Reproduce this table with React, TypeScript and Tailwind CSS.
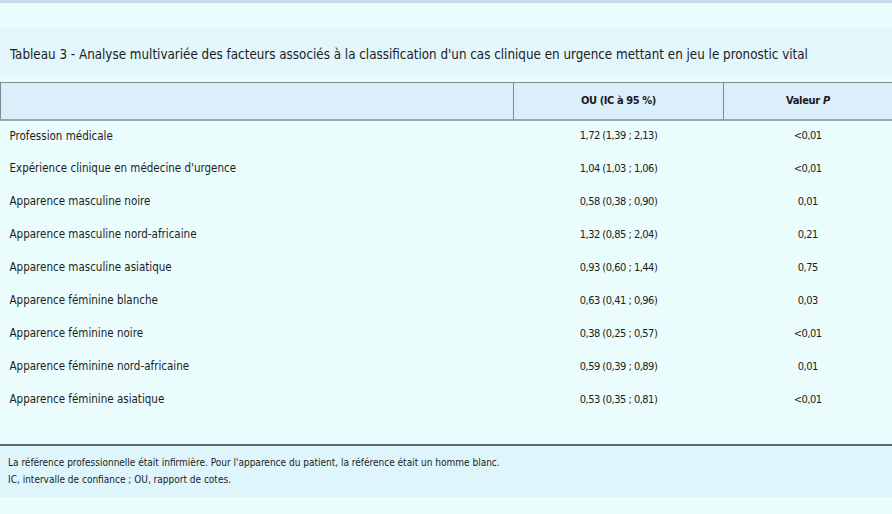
const rows = [
  ["Profession médicale", "1,72 (1,39 ; 2,13)", "<0,01"],
  ["Expérience clinique en médecine d'urgence", "1,04 (1,03 ; 1,06)", "<0,01"],
  ["Apparence masculine noire", "0,58 (0,38 ; 0,90)", "0,01"],
  ["Apparence masculine nord-africaine", "1,32 (0,85 ; 2,04)", "0,21"],
  ["Apparence masculine asiatique", "0,93 (0,60 ; 1,44)", "0,75"],
  ["Apparence féminine blanche", "0,63 (0,41 ; 0,96)", "0,03"],
  ["Apparence féminine noire", "0,38 (0,25 ; 0,57)", "<0,01"],
  ["Apparence féminine nord-africaine", "0,59 (0,39 ; 0,89)", "0,01"],
  ["Apparence féminine asiatique", "0,53 (0,35 ; 0,81)", "<0,01"],
];

export default function App() {
  return (
    <div
      className="w-[892px] h-[514px] overflow-hidden bg-[#ebfcfd] text-[#1c1c1c]"
      style={{ fontFamily: '"DejaVu Sans Condensed", "Liberation Sans Narrow", sans-serif' }}
    >
      <div className="h-[3px] bg-[#c9d9ee]" />
      <div className="h-[25px]" />
      {/* titre */}
      <div className="h-[49px] bg-[#e2f6fb] flex items-center pl-[10px] pt-[5px] text-[13.3px]">
        Tableau 3 - Analyse multivariée des facteurs associés à la classification d'un cas clinique en urgence mettant en jeu le pronostic vital
      </div>
      <div className="h-[5px]" />
      <table className="w-full border-collapse text-[11.5px]">
        <thead>
          <tr className="h-[37px] bg-[#dbeffb] border-t border-t-[#7d8a91] border-b-2 border-b-[#9aa6ad]">
            <th className="w-[513px] border-l border-l-[#7d8a91]" />
            <th className="w-[210px] border-l border-l-[#7d8a91] font-bold text-center text-[11px] tracking-[-0.4px]">
              OU (IC à 95 %)
            </th>
            <th className="border-l border-l-[#7d8a91] font-bold text-center text-[11px] tracking-[-0.3px]">
              Valeur <i>P</i>
            </th>
          </tr>
        </thead>
        <tbody>
          {rows.map((r) => (
            <tr key={r[0]} className="h-[33px]">
              <td className="pl-[9px]">{r[0]}</td>
              <td className="text-center text-[11px] tracking-[-0.5px]">{r[1]}</td>
              <td className="text-center text-[11px] tracking-[-0.5px]">{r[2]}</td>
            </tr>
          ))}
        </tbody>
      </table>
      <div className="h-[27px]" />
      <div className="border-t-2 border-t-[#5f6b73] bg-[#def5fc] h-[53px] pl-[8px] pt-[8px] text-[10px] leading-[17px]">
        <p>La référence professionnelle était infirmière. Pour l'apparence du patient, la référence était un homme blanc.</p>
        <p>IC, intervalle de confiance ; OU, rapport de cotes.</p>
      </div>
    </div>
  );
}
